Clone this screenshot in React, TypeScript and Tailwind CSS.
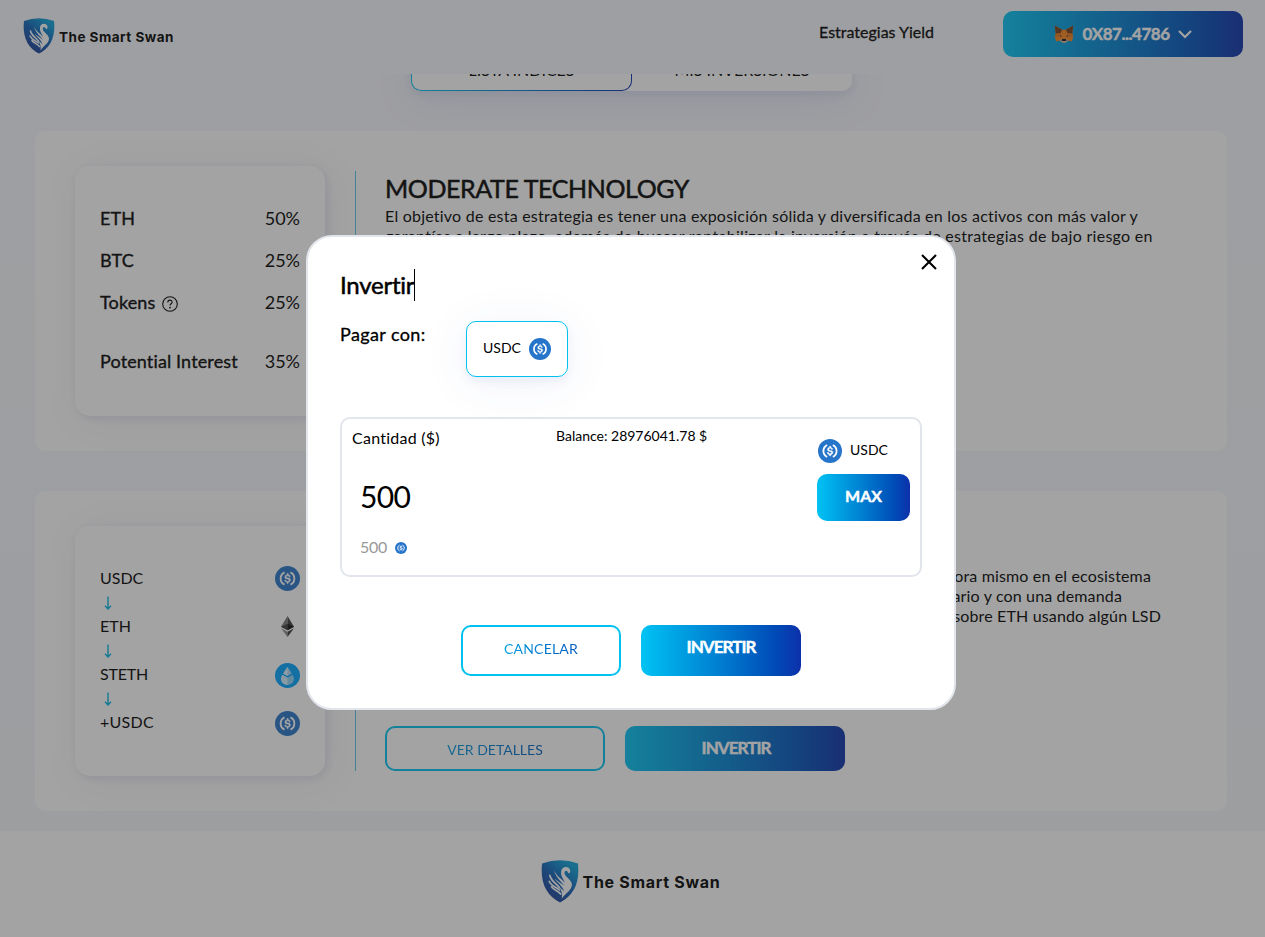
import type { ReactNode } from "react";

function SwanLogo({ className }: { className: string }) {
  return (
    <svg viewBox="0 0 62 72" className={className}>
      <defs>
        <linearGradient id="shield" x1="0.75" y1="0.1" x2="0.2" y2="0.9">
          <stop offset="0" stopColor="#0a9fd8" />
          <stop offset="0.45" stopColor="#0e62b8" />
          <stop offset="1" stopColor="#1c3a94" />
        </linearGradient>
      </defs>
      <path d="M1 6Q31-5 61 6Q64 32 54 50Q46 64 31 71Q16 64 8 50Q-2 32 1 6Z" fill="url(#shield)" />
      <path
        d="M33 20C33 10 46 9 48 17C49 22 45 24 44 20C42 16 37 18 39 24C41 29 50 33 51 41C51 51 40 55 34 65C35 57 34 52 30 46C33 47 36 50 38 53C36 44 27 39 22 31C27 36 34 39 39 44C34 36 24 30 21 17C26 28 35 32 39 38C36 30 32 26 33 20Z"
        fill="#fff"
      />
      <path d="M14 26C16 35 24 39 30 46M13 36C16 43 23 45 30 50M17 45C20 50 27 51 32 57" stroke="#fff" strokeWidth="3" strokeLinecap="round" fill="none" />
    </svg>
  );
}

function Usdc({ className }: { className: string }) {
  return (
    <svg viewBox="0 0 32 32" className={className}>
      <circle cx="16" cy="16" r="16" fill="#2775ca" />
      <path
        transform="translate(1.600 1.600) scale(0.9)"
        fill="#fff"
        stroke="#fff"
        strokeWidth="0.5"
        d="M20.4 18.2c0-2.1-1.3-2.8-3.8-3.1-1.8-.2-2.2-.7-2.2-1.6s.6-1.4 1.8-1.4c1.1 0 1.7.4 2 1.3.1.2.2.3.4.3h1c.2 0 .4-.2.4-.4v-.1a3.100 3.100 0 0 0-2.800-2.500v-1.500c0-.2-.2-.4-.5-.5h-.9c-.2 0-.4.2-.5.5v1.400c-1.900.3-3.100 1.500-3.100 3.100 0 2 1.200 2.800 3.700 3.100 1.700.3 2.200.7 2.200 1.600 0 1-.8 1.600-2 1.600-1.600 0-2.100-.7-2.300-1.600 0-.2-.2-.4-.4-.4h-1.100c-.2 0-.4.2-.4.4v.1c.3 1.500 1.200 2.600 3.300 2.900v1.500c0 .2.2.4.5.5h.9c.2 0 .4-.2.5-.5v-1.500c1.900-.3 3.200-1.600 3.200-3.200z"
      />
      <path d="M12.200 8.200A8.600 8.600 0 0 0 12.200 23.800M19.800 8.200A8.600 8.600 0 0 1 19.800 23.800" stroke="#fff" strokeWidth="2.400" fill="none" />
    </svg>
  );
}

function Eth() {
  return (
    <svg viewBox="0 0 26 42" className="mr-[6px] h-[21px] w-[13px]">
      <path d="M13 0V28.500L0 21.500Z" fill="#777" />
      <path d="M13 0L26 21.500L13 28.500Z" fill="#3a3a3a" />
      <path d="M0 21.500L13 15.500V28.500Z" fill="#3c3c3b" />
      <path d="M26 21.500L13 15.500V28.500Z" fill="#0d0d0d" />
      <path d="M0 24.500L13 31.500V42Z" fill="#8c8c8c" />
      <path d="M26 24.500L13 31.500V42Z" fill="#3a3a3a" />
    </svg>
  );
}

function Steth() {
  return (
    <svg viewBox="0 0 32 32" className="mt-[2px] size-[25px]">
      <circle cx="16" cy="16" r="16" fill="#00a3ff" />
      <path d="M16 5L21.500 13.500L16 16.700L10.500 13.500Z" fill="#a6dcfa" />
      <path d="M16 5V16.700L10.500 13.500Z" fill="#e0f4ff" />
      <path d="M9.500 15L16 18.800L22.500 15C27 22 22 28 16 28C10 28 5 22 9.500 15Z" fill="#8fd3f8" />
      <path d="M9.500 15L16 18.800V28C10 28 5 22 9.500 15Z" fill="#d3effd" />
    </svg>
  );
}

function Fox() {
  return (
    <svg viewBox="0 0 40 37" className="h-[18px] w-5">
      <path d="M1 1L16 10H24L39 1L37 18L39 25L36 34L28 32L24 36H16L12 32L4 34L1 25L3 18Z" fill="#f6851b" />
      <path d="M1 1L16 10L13 17L3 18ZM39 1L24 10L27 17L37 18Z" fill="#763d16" />
      <path d="M3 18L13 17L15 25L1 25ZM37 18L27 17L25 25L39 25Z" fill="#e4761b" />
      <path d="M12 32L15 29H25L28 32L24 36H16Z" fill="#d7c1b3" />
      <path d="M16 29H24L25 33H15Z" fill="#161616" />
      <path d="M10 21L15 22L14 24ZM30 21L25 22L26 24Z" fill="#233447" />
    </svg>
  );
}

function Down() {
  return (
    <svg viewBox="0 0 8 14" className="mt-[2px] ml-1 h-[14px] w-2" fill="none" stroke="#00b4e0">
      <path d="M4 0.500V13M1 9.800L4 13L7 9.800" strokeWidth="1.400" />
    </svg>
  );
}

function StrategyCard({ side, children }: { side: ReactNode; children: ReactNode }) {
  return (
    <section className="flex h-80 rounded-[10px] bg-white pt-[35px] pl-10">
      <div className="h-[250px] w-[250px] shrink-0 rounded-[15px] bg-white px-[25px] shadow-[2px_2px_8px_rgba(60,60,140,0.12),5px_5px_40px_rgba(60,60,140,0.07)]">
        {side}
      </div>
      <div className="mt-[5px] ml-[30px] h-60 w-px shrink-0 bg-[#50c4e4]" />
      <div className="ml-[30px] flex h-[245px] flex-col pt-[5px]">{children}</div>
    </section>
  );
}

function Allocation({ label, value, help }: { label: string; value: string; help?: boolean }) {
  return (
    <div className="flex h-[22px] items-center justify-between text-lg leading-[22px]">
      <span className="flex items-center tracking-[0.13px] [-webkit-text-stroke:0.35px]">
        {label}
        {help && (
          <svg viewBox="0 0 16 16" className="mt-[3px] ml-[7px] size-4" fill="none" stroke="#000" strokeWidth="1.100">
            <circle cx="8" cy="8" r="7.300" />
            <path d="M5.800 6.400C5.800 3.300 10.200 3.500 10.100 6.200C10 7.800 8 7.800 8 9.600" />
            <circle cx="8" cy="11.600" r="0.400" />
          </svg>
        )}
      </span>
      <span>{value}</span>
    </div>
  );
}

const gradient = "bg-linear-to-r from-[#05c3f3] to-[#0d30aa]";
const gradientText = "bg-linear-to-r from-[#05c3f3] to-[#0d30aa] bg-clip-text text-transparent";

function Modal() {
  return (
    <div className="relative mt-[7px] flex h-[475px] w-[650px] flex-col rounded-[26px] border-2 border-[#e2e6ec] bg-white px-8 text-black">
      <svg viewBox="0 0 16 16" className="absolute top-[17px] right-[17px] size-4" stroke="#000" strokeWidth="2.100">
        <path d="M1 1L15 15M15 1L1 15" />
      </svg>
      <div className="mt-8 flex h-8 items-center">
        <h2 className="w-[74px] pb-px text-2xl leading-[31px] tracking-[-0.25px] whitespace-nowrap [-webkit-text-stroke:0.5px]">Invertir</h2>
        <span className="h-8 w-px bg-black" />
      </div>
      <div className="mt-5 flex">
        <span className="mt-[2px] w-[126px] text-lg leading-[22px] tracking-[0.39px] [-webkit-text-stroke:0.3px]">Pagar con:</span>
        <div className="flex h-14 w-[102px] items-center rounded-[10px] border border-[#00c2f0] pl-4 shadow-[0_5px_10px_rgba(60,80,180,0.07),0_6px_50px_rgba(60,80,180,0.07)]">
          <span className="pb-px text-sm">USDC</span>
          <Usdc className="ml-2 size-[22px]" />
        </div>
      </div>
      <div className="mt-10 flex h-40 w-[582px] rounded-[10px] border-2 border-[#e2e6ec]">
        <div className="w-[204px] pl-[10px]">
          <p className="mt-[9px] leading-5 tracking-[0.25px]">Cantidad ($)</p>
          <p className="mt-7 pl-2 text-[30px] leading-10 tracking-[-0.7px]">500</p>
          <div className="mt-[21px] flex items-center pl-2 leading-5 tracking-[-0.28px] text-[#999]">
            500 <Usdc className="mt-[2px] ml-2 size-3" />
          </div>
        </div>
        <p className="mt-2 ml-[10px] w-[261px] text-sm leading-[18px]">Balance: 28976041.78 $</p>
        <div className="pt-5">
          <div className="flex h-6 items-center pl-px text-sm">
            <Usdc className="mr-2 size-6" />
            <span className="pb-px">USDC</span>
          </div>
          <button className={`mt-[11px] h-[47px] w-[93px] rounded-[10px] pb-[2px] font-bold text-white [-webkit-text-stroke:0.4px] ${gradient}`}>MAX</button>
        </div>
      </div>
      <div className="mt-12 flex justify-center gap-5">
        <button className="h-[51px] w-40 rounded-[10px] border-2 border-[#00c2f0] pb-[2px] text-sm">
          <span className={`block tracking-[0.2px] ${gradientText}`}>CANCELAR</span>
        </button>
        <button className={`h-[51px] w-40 rounded-[10px] pb-[6px] text-[17px] font-bold tracking-[-0.95px] text-white [-webkit-text-stroke:0.4px] ${gradient}`}>INVERTIR</button>
      </div>
    </div>
  );
}

export default function App() {
  return (
    <div className="relative h-[937px] w-[1265px] overflow-hidden bg-linear-to-b from-[#f7f8fd] from-10% to-[#f4f7fa] to-90% font-['Lato',sans-serif] text-black">
      <header className="relative z-10 flex h-[74px] items-start bg-[#f7f8fd]">
        <div className="ml-[23px] flex pt-[18px]">
          <SwanLogo className="h-9 w-8" />
          <span className="mt-[10px] ml-1 font-['Inter',sans-serif] text-[13.5px] leading-[18px] font-bold tracking-[0.49px]">The Smart Swan</span>
        </div>
        <a className="mt-[22px] ml-auto leading-5 [-webkit-text-stroke:0.3px]">Estrategias Yield</a>
        <button className={`mt-[11px] mr-[22px] ml-[69px] flex h-[46px] w-60 items-center justify-center rounded-[10px] text-white ${gradient}`}>
          <Fox />
          <span className="ml-2 text-[17px] font-bold tracking-[-0.5px] [-webkit-text-stroke:0.4px]">0X87...4786</span>
          <svg viewBox="0 0 14 9" className="ml-2 h-[9px] w-[14px]" fill="none" stroke="#fff" strokeWidth="2.200">
            <path d="M1 1L7 7L13 1" />
          </svg>
        </button>
      </header>

      <main className="pr-[38px] pl-[35px]">
        <div className="-mt-[23px] ml-[376px] flex h-10 w-[441px] rounded-[10px] bg-white leading-9 shadow-[0_3px_8px_rgba(60,80,180,0.10),0_8px_40px_rgba(60,80,180,0.12)]">
          <div className={`w-[221px] rounded-[10px] p-px ${gradient}`}>
            <div className="h-full rounded-[9px] bg-white text-center">LISTA ÍNDICES</div>
          </div>
          <div className="w-[220px] pt-px text-center">MIS INVERSIONES</div>
        </div>

        <div className="mt-10 flex flex-col gap-10">
          <StrategyCard
            side={
              <div className="flex flex-col gap-5 pt-[41px]">
                <Allocation label="ETH" value="50%" />
                <Allocation label="BTC" value="25%" />
                <Allocation label="Tokens" value="25%" help />
                <div className="mt-[17px]">
                  <Allocation label="Potential Interest" value="35%" />
                </div>
              </div>
            }
          >
            <h3 className="mt-[2px] -ml-px text-[25px] leading-[30px] tracking-[-0.4px] [-webkit-text-stroke:0.5px]">MODERATE TECHNOLOGY</h3>
            <p className="mt-[3px] -ml-px leading-5 whitespace-nowrap tracking-[0.22px]">
              El objetivo de esta estrategia es tener una exposición sólida y diversificada en los activos con más valor y
              <br />
              <span className="tracking-[0.29px]">garantías a largo plazo, además de buscar rentabilizar la inversión a través de estrategias de bajo riesgo en</span>
            </p>
          </StrategyCard>

          <StrategyCard
            side={
              <div className="flex flex-col pt-10">
                <div className="flex h-6 items-center justify-between">USDC<Usdc className="size-[25px]" /></div>
                <div className="flex h-6 items-center"><Down /></div>
                <div className="flex h-6 items-center justify-between">ETH<Eth /></div>
                <div className="flex h-6 items-center"><Down /></div>
                <div className="flex h-6 items-center justify-between"><span className="tracking-[-0.2px]">STETH</span><Steth /></div>
                <div className="flex h-6 items-center"><Down /></div>
                <div className="flex h-6 items-center justify-between"><span className="tracking-[0.28px]">+USDC</span><Usdc className="mt-[2px] size-[25px]" /></div>
              </div>
            }
          >
            <div className="mt-[35px] leading-5 whitespace-nowrap tracking-[0.15px]">
              <p className="w-[765px] text-right">ahora mismo en el ecosistema</p>
              <p className="w-[736px] text-right">diario y con una demanda</p>
              <p className="w-[775px] text-right">sobre ETH usando algún LSD</p>
            </div>
            <div className="mt-auto -ml-px flex gap-5">
              <button className="h-[45px] w-[220px] rounded-[10px] border-2 border-[#00c2f0] pt-[2px] text-sm">
                <span className={`block ${gradientText}`}>VER DETALLES</span>
              </button>
              <button className={`h-[45px] w-[220px] rounded-[10px] pb-px pl-[2px] text-[17px] font-bold tracking-[-0.95px] text-white [-webkit-text-stroke:0.4px] ${gradient}`}>INVERTIR</button>
            </div>
          </StrategyCard>
        </div>
      </main>

      <footer className="mt-5 flex h-[106px] justify-center bg-white pt-[29px] pr-1">
        <SwanLogo className="h-[43px] w-[38px]" />
        <span className="mt-3 ml-1 font-['Inter',sans-serif] text-base leading-5 font-bold tracking-[0.7px]">The Smart Swan</span>
      </footer>

      <div className="absolute inset-0 z-20 flex items-center justify-center bg-[rgba(45,45,45,0.44)] pr-[3px]">
        <Modal />
      </div>
    </div>
  );
}
